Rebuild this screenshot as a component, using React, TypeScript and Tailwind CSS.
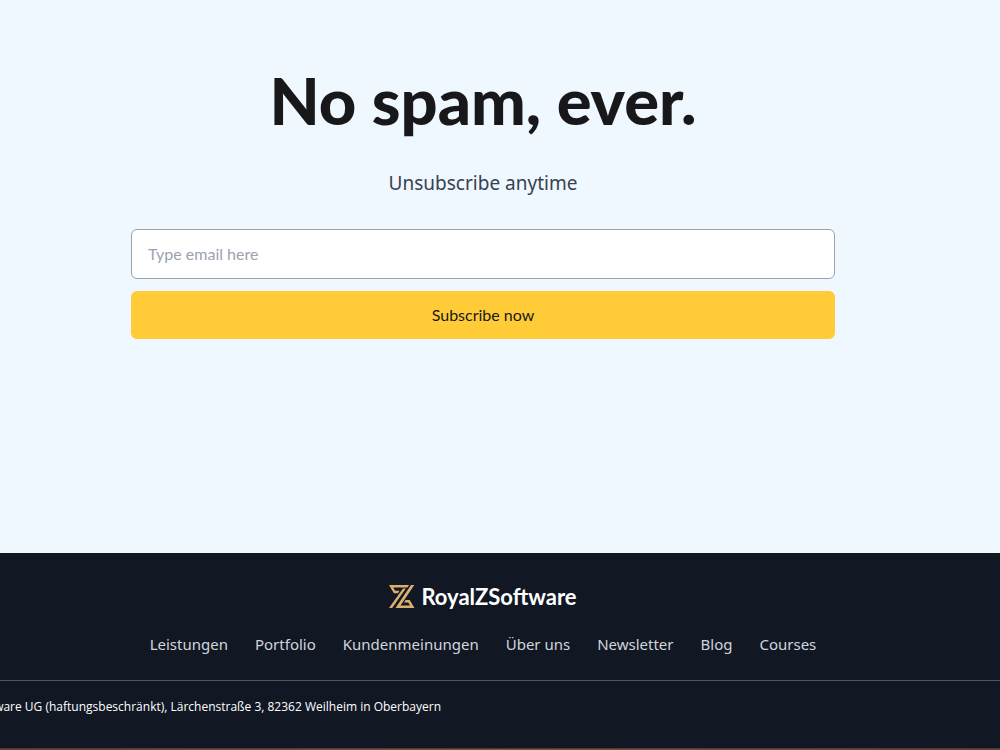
const links = [
  "Leistungen",
  "Portfolio",
  "Kundenmeinungen",
  "Über uns",
  "Newsletter",
  "Blog",
  "Courses",
];

function Logo() {
  return (
    <svg viewBox="0 0 26 24" className="w-[26px] h-6" fill="#dcb06c" aria-hidden="true">
      <path d="M0 0H20L18.500 2.500H4.200L6.200 5.700H10.500L9 8.200H4.900Z" />
      <path d="M14 3.500H16.800L3.200 23H0Z" />
      <path d="M22 0H25.300L11.500 20.500H21L19.300 17.500H15L16.600 15H20.700L25.500 23H6.500Z" />
    </svg>
  );
}

function Newsletter() {
  return (
    <section className="bg-[#eff7ff] pt-15 pr-[34px] pb-[214px]">
      <div className="max-w-[704px] mx-auto text-center">
        <h2 className="font-['Lato'] font-black text-[65px] leading-20 text-[#18181b]">
          No spam, ever.
        </h2>
        <p className="mt-[29px] text-[19px] leading-7 text-[#374151]">Unsubscribe anytime</p>
        <form className="mt-8 flex flex-col gap-3 font-['Lato'] text-base">
          <input
            type="email"
            aria-label="Email"
            placeholder="Type email here"
            className="h-[50px] px-4 pb-0.5 rounded-md border border-[#9ca3af] bg-white placeholder:text-[#9ca3af]"
          />
          <button type="button" className="h-12 rounded-md bg-[#ffcc38] text-[#18181b]">
            Subscribe now
          </button>
        </form>
      </div>
    </section>
  );
}

function Footer() {
  return (
    <footer className="bg-[#111824] pt-8 overflow-hidden">
      <div className="pr-[34px]">
        <a href="#" className="flex items-center justify-center gap-1.5 h-6 text-white">
          <Logo />
          <span className="font-['Lato'] font-bold text-[22px] leading-6">RoyalZSoftware</span>
        </a>
        <nav className="mt-[23px] flex justify-center gap-[27px] text-[#d1d5db]">
          {links.map((link) => (
            <a key={link} href="#" className="text-[15px] leading-6">
              {link}
            </a>
          ))}
        </nav>
      </div>
      <div className="mt-6 border-y border-t-[#4b5563] border-b-[#374151] pt-4 pb-8">
        <p className="flex justify-end w-[441px] whitespace-nowrap font-['Open_Sans'] text-xs leading-[19px] text-white">
          RoyalZSoftware UG (haftungsbeschränkt), Lärchenstraße 3, 82362 Weilheim in Oberbayern
        </p>
      </div>
      <div className="h-px bg-linear-to-r from-[#7c3a1c] via-[#8a5228] to-[#7c3a1c]" />
    </footer>
  );
}

export default function App() {
  return (
    <main className="min-h-screen bg-[#111824] overflow-hidden font-['Noto_Sans',sans-serif]">
      <Newsletter />
      <Footer />
    </main>
  );
}
